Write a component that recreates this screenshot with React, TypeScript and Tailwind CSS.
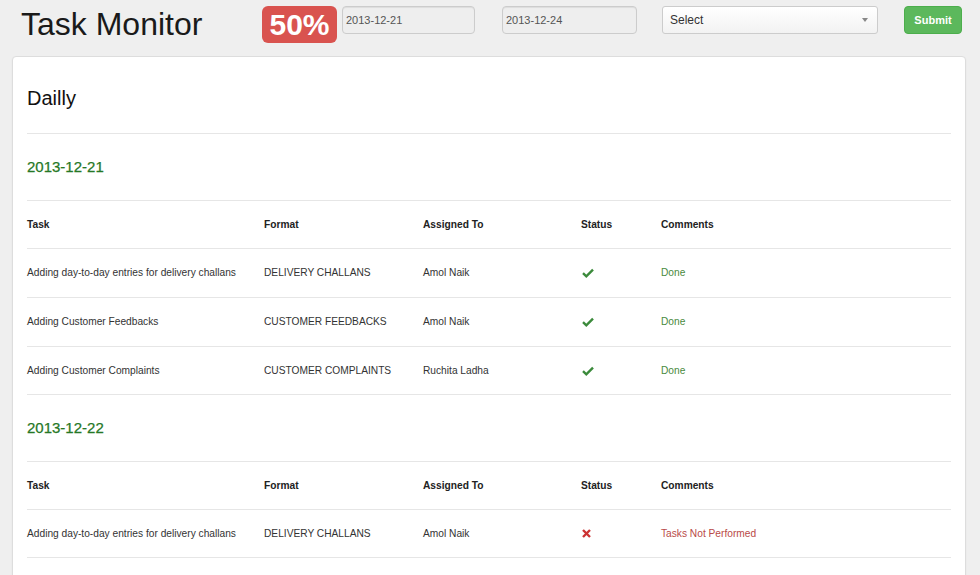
import React from 'react'

type Row = {
  task: string
  format: string
  assigned: string
  ok: boolean
  comment: string
}

const SECTIONS: { date: string; rows: Row[] }[] = [
  {
    date: '2013-12-21',
    rows: [
      { task: 'Adding day-to-day entries for delivery challans', format: 'DELIVERY CHALLANS', assigned: 'Amol Naik', ok: true, comment: 'Done' },
      { task: 'Adding Customer Feedbacks', format: 'CUSTOMER FEEDBACKS', assigned: 'Amol Naik', ok: true, comment: 'Done' },
      { task: 'Adding Customer Complaints', format: 'CUSTOMER COMPLAINTS', assigned: 'Ruchita Ladha', ok: true, comment: 'Done' },
    ],
  },
  {
    date: '2013-12-22',
    rows: [
      { task: 'Adding day-to-day entries for delivery challans', format: 'DELIVERY CHALLANS', assigned: 'Amol Naik', ok: false, comment: 'Tasks Not Performed' },
    ],
  },
]

const COLS = 'grid grid-cols-[237px_159px_158px_80px_1fr] items-center'

function CheckIcon() {
  return (
    <svg width="12" height="10" viewBox="0 0 12 10" className="block">
      <path d="M1 5.2 L4.3 8.3 L11 1.6" fill="none" stroke="#3b8a3b" strokeWidth="2.4" strokeLinejoin="miter" />
    </svg>
  )
}

function CrossIcon() {
  return (
    <svg width="9" height="9" viewBox="0 0 9 9" className="block">
      <path d="M1 1 L8 8 M8 1 L1 8" fill="none" stroke="#cc3333" strokeWidth="2.4" />
    </svg>
  )
}

function Section({ date, rows }: { date: string; rows: Row[] }) {
  return (
    <div>
      <h4 className="text-[15px] leading-[18px] text-[#267826] mt-[24px] mb-[24px] [-webkit-text-stroke:0.25px_#267826]">{date}</h4>
      <div className="text-[10.2px] text-[#333]">
        <div className={`${COLS} h-[48px] border-t border-[#e6e6e6] font-bold text-[#222]`}>
          <div>Task</div>
          <div>Format</div>
          <div>Assigned To</div>
          <div>Status</div>
          <div>Comments</div>
        </div>
        {rows.map((r, i) => (
          <div
            key={i}
            className={`${COLS} h-[49px] border-t border-[#e6e6e6] ${i === rows.length - 1 ? 'border-b' : ''}`}
          >
            <div>{r.task}</div>
            <div>{r.format}</div>
            <div>{r.assigned}</div>
            <div className="pl-[1px]">{r.ok ? <CheckIcon /> : <CrossIcon />}</div>
            <div className={r.ok ? 'text-[#4a8a40]' : 'text-[#b94a48]'}>{r.comment}</div>
          </div>
        ))}
      </div>
    </div>
  )
}

export default function App() {
  return (
    <div className="min-h-[575px] bg-[#efefef] font-['Liberation_Sans',Arial,sans-serif] overflow-hidden">
      {/* Top bar */}
      <div className="flex items-start pl-[21px] pt-[6px] h-[56px]">
        <h1 className="text-[32px] leading-[36px] text-[#1a1a1a] w-[182px] whitespace-nowrap">Task Monitor</h1>
        <div className="ml-[59px] w-[75px] h-[37px] rounded-[6px] bg-[#d9534f] text-white font-bold text-[30px] leading-[37px] text-center">
          50%
        </div>
        <div className="ml-[5px] w-[133px] h-[28px] rounded-[4px] border border-[#cccccc] bg-[#eeeeee] shadow-[inset_0_1px_1px_rgba(0,0,0,0.075)] text-[11px] leading-[26px] text-[#555] pl-[3px]">
          2013-12-21
        </div>
        <div className="ml-[27px] w-[135px] h-[28px] rounded-[4px] border border-[#cccccc] bg-[#eeeeee] shadow-[inset_0_1px_1px_rgba(0,0,0,0.075)] text-[11px] leading-[26px] text-[#555] pl-[3px]">
          2013-12-24
        </div>
        <div className="ml-[25px] w-[216px] h-[28px] rounded-[3px] border border-[#cccccc] bg-gradient-to-b from-[#ffffff] to-[#f2f2f2] flex items-center justify-between pl-[7px] pr-[9px] text-[12px] text-[#333]">
          <span>Select</span>
          <span className="w-0 h-0 border-l-[3px] border-r-[3px] border-t-[4px] border-l-transparent border-r-transparent border-t-[#888]" />
        </div>
        <button className="ml-[26px] w-[58px] h-[28px] rounded-[4px] border border-[#4cae4c] bg-[#5cb85c] text-white font-bold text-[11px]">
          Submit
        </button>
      </div>

      {/* Panel */}
      <div className="ml-[12px] w-[954px] bg-white border border-[#dddddd] rounded-[4px] shadow-[0_1px_2px_rgba(0,0,0,0.06)] px-[14px] pt-[29px] pb-[40px]">
        <h2 className="text-[20px] leading-[24px] text-[#111]">Dailly</h2>
        <div className="mt-[23px] border-t border-[#e6e6e6]" />
        {SECTIONS.map(s => (
          <Section key={s.date} date={s.date} rows={s.rows} />
        ))}
      </div>
    </div>
  )
}
